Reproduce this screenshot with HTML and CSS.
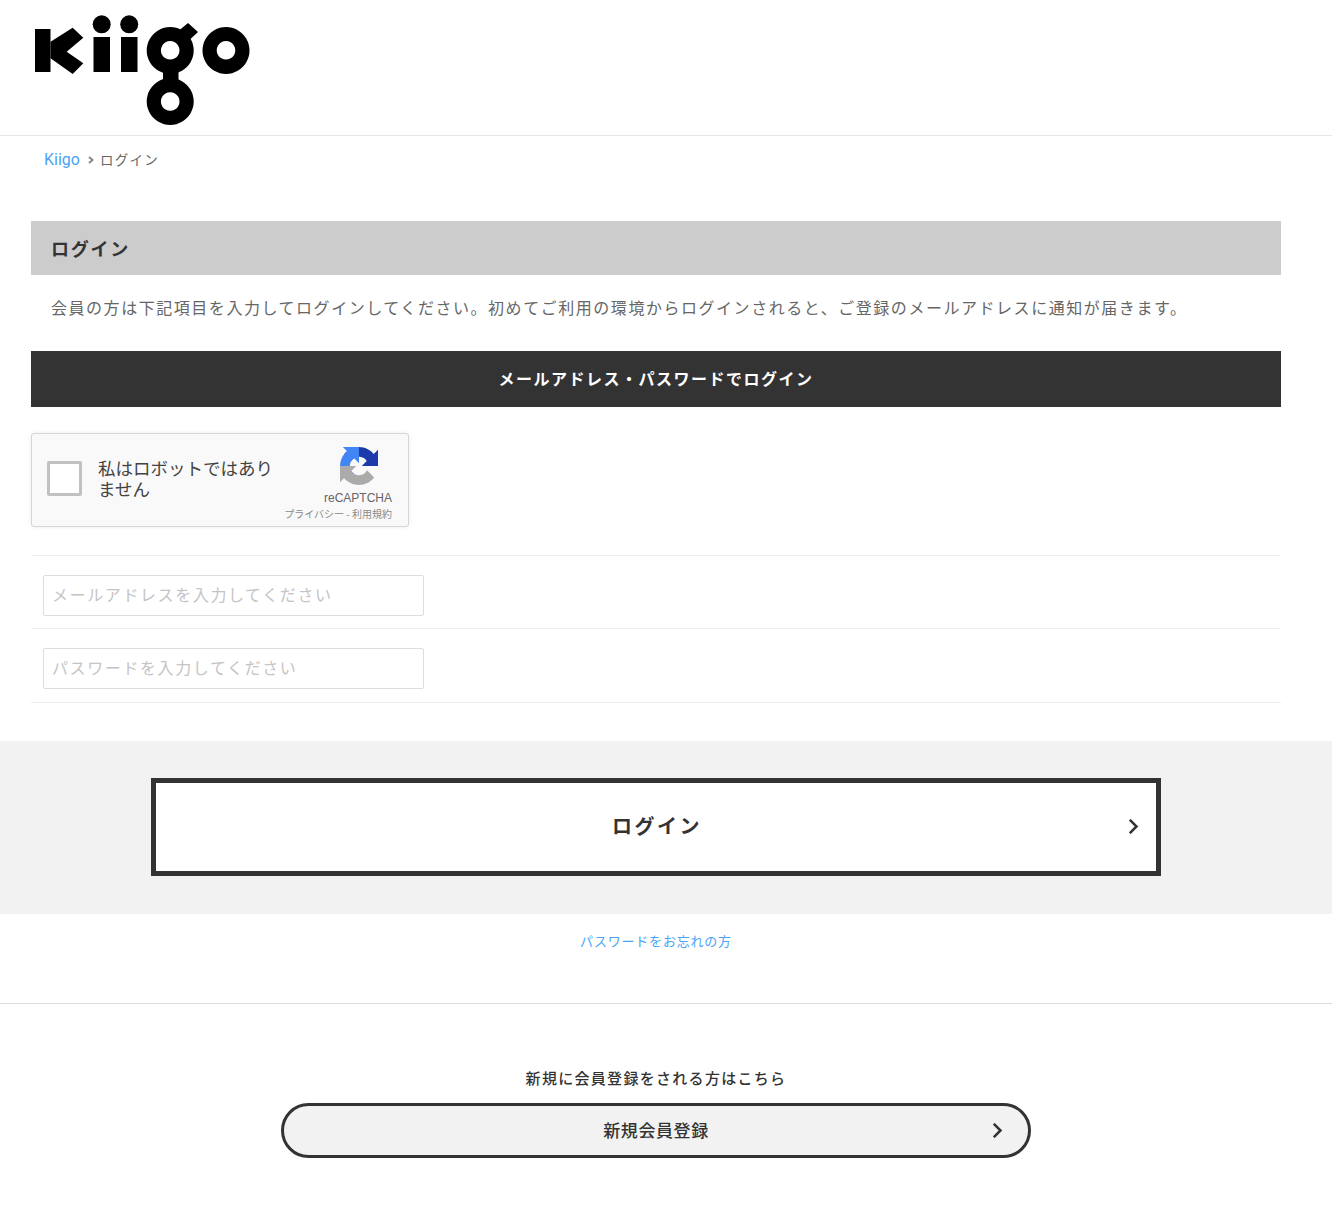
FILE: index.html
```html
<!DOCTYPE html>
<html lang="ja">
<head>
<meta charset="utf-8">
<title>ログイン | Kiigo</title>
<link rel="stylesheet" href="styles.css">
</head>
<body>
<header class="site-header">
  <svg class="logo" viewBox="0 0 216 110" aria-label="Kiigo" role="img">
    <path d="M1 14h15.500v43H1z"/>
    <path d="M16.500 26.700 38.700 12.700 49.300 22.700 32.700 36.700 49.300 48.300 38.700 59 16.500 43.300z"/>
    <path d="M59.500 22H76v35H59.500zM87 22h16.500v35H87z"/>
    <circle cx="67.700" cy="9.300" r="9"/>
    <circle cx="95.200" cy="9.300" r="9"/>
    <path d="M142 18 154 8 164 17 150 30z"/>
    <path d="M129 55h15.500v10H129z"/>
    <path fill-rule="evenodd" d="M136.200 12a23.500 23.500 0 1 0 .01 0zM136.200 26a9.300 9.300 0 1 1-.01 0z"/>
    <path fill-rule="evenodd" d="M136.200 63a23.500 23.500 0 1 0 .01 0zM136.200 77.200a9.300 9.300 0 1 1-.01 0z"/>
    <path fill-rule="evenodd" d="M192 12a23.500 23.500 0 1 0 .01 0zM192 26a9.300 9.300 0 1 1-.01 0z"/>
  </svg>
</header>
<nav class="breadcrumb">
  <a class="link" href="#">Kiigo</a>
  <svg class="crumb-sep" viewBox="0 0 8 8"><path d="M2 1l3.500 3L2 7"/></svg>
  <span class="crumb-current">ログイン</span>
</nav>
<main>
  <div class="wrap">
    <h1 class="page-title">ログイン</h1>
    <p class="lead">会員の方は下記項目を入力してログインしてください。初めてご利用の環境からログインされると、ご登録のメールアドレスに通知が届きます。</p>
    <h2 class="bar-title">メールアドレス・パスワードでログイン</h2>
    <div class="captcha">
      <span class="captcha-box"></span>
      <span class="captcha-label">私はロボットではありません</span>
      <div class="captcha-brand">
        <svg class="captcha-icon" viewBox="0 0 64 64">
          <path fill="#1c3aa9" d="M64 31.955l-.033-1.37V4.687l-7.16 7.16C50.948 4.674 42.033.093 32.05.093 21.66.093 12.43 5.05 6.595 12.73l11.736 11.86a15.55 15.55 0 0 1 4.753-5.333c2.05-1.6 4.952-2.906 8.968-2.906.485 0 .86.057 1.135.163 4.976.393 9.288 3.14 11.828 7.124l-8.307 8.307c10.522-.04 22.4-.066 27.3.01"/>
          <path fill="#4285f4" d="M32.04.002l-1.37.033H4.772l7.16 7.16C4.759 13.054.178 21.97.178 31.952c0 10.39 4.957 19.62 12.637 25.455l11.86-11.736a15.55 15.55 0 0 1-5.333-4.753c-1.6-2.05-2.906-4.952-2.906-8.968 0-.485.057-.86.163-1.135.393-4.976 3.14-9.288 7.124-11.828l8.307 8.307c-.04-10.522-.066-22.4.01-27.3"/>
          <path fill="#ababab" d="M.002 31.958l.033 1.37v25.898l7.16-7.16c5.86 7.173 14.775 11.754 24.757 11.754 10.39 0 19.62-4.957 25.455-12.637l-11.736-11.86a15.55 15.55 0 0 1-4.753 5.333c-2.05 1.6-4.952 2.906-8.968 2.906-.485 0-.86-.057-1.135-.163-4.976-.393-9.288-3.14-11.828-7.124l8.307-8.307c-10.522.04-22.4.066-27.3-.01"/>
        </svg>
        <span class="captcha-name">reCAPTCHA</span>
        <span class="captcha-terms">プライバシー - 利用規約</span>
      </div>
    </div>
    <div class="field-row"><input class="field" type="text" placeholder="メールアドレスを入力してください"></div>
    <div class="field-row field-row-last"><input class="field" type="password" placeholder="パスワードを入力してください"></div>
  </div>
  <section class="action-band">
    <a class="login-btn" href="#">ログイン
      <svg class="chev chev-login" viewBox="0 0 12 18"><path d="M2 2l7 7-7 7"/></svg>
    </a>
  </section>
  <p class="forgot"><a class="link" href="#">パスワードをお忘れの方</a></p>
  <section class="register">
    <p class="register-text">新規に会員登録をされる方はこちら</p>
    <a class="register-btn" href="#">新規会員登録
      <svg class="chev chev-register" viewBox="0 0 12 18"><path d="M2 2l7 7-7 7"/></svg>
    </a>
  </section>
</main>
</body>
</html>
```
FILE: styles.css
```css
* { box-sizing: border-box; }
html, body { margin: 0; padding: 0; }
body {
  background: #fff;
  color: #333;
  font-family: "Noto Sans CJK JP", "Noto Sans", sans-serif;
  height: 1211px;
  overflow: hidden;
}
a { text-decoration: none; }
.link { color: #4aa3f5; }

.site-header {
  height: 136px;
  border-bottom: 1px solid #e6e6e6;
  padding: 15px 0 0 34px;
}
.logo { display: block; width: 216px; height: 110px; fill: #000; }

.breadcrumb {
  display: flex;
  align-items: flex-start;
  height: 48px;
  padding: 13px 0 0 44px;
  margin-bottom: 37px;
  font-size: 13.500px;
  line-height: 20px;
}
.breadcrumb .link { font-family: "Roboto", "Noto Sans", sans-serif; font-size: 16px; line-height: 22px; }
.crumb-sep { width: 8px; height: 8px; margin: 7px 5px 0 7px; fill: none; stroke: #888; stroke-width: 2; }
.crumb-current { color: #666; letter-spacing: 1.300px; }

.wrap { margin-left: 31px; width: 1250px; }
.page-title {
  margin: 0;
  height: 54px;
  background: #ccc;
  padding-left: 20px;
  font-size: 18px;
  font-weight: 700;
  line-height: 55px;
  letter-spacing: 1.750px;
}
.lead {
  margin: 0;
  padding: 18px 0 0 20px;
  height: 76px;
  font-size: 16px;
  line-height: 28px;
  letter-spacing: 1.540px;
  color: #666;
  white-space: nowrap;
}
.bar-title {
  margin: 0;
  height: 56px;
  background: #333;
  color: #fff;
  font-size: 16px;
  font-weight: 700;
  line-height: 54px;
  letter-spacing: 1.500px;
  text-align: center;
}
.captcha {
  position: relative;
  display: flex;
  margin: 26px 0 28px;
  width: 378px;
  height: 94px;
  background: #f9f9f9;
  border: 1px solid #d6d6d6;
  border-radius: 3px;
  box-shadow: 0 0 4px rgba(0, 0, 0, .08);
}
.captcha-box {
  flex: none;
  width: 35px;
  height: 35px;
  margin: 27px 0 0 15px;
  background: #fff;
  border: 3px solid #c1c1c1;
  border-radius: 2px;
}
.captcha-label {
  width: 180px;
  margin: 23px 0 0 16px;
  font-size: 17.500px;
  line-height: 21px;
  color: #444;
}
.captcha-brand {
  position: absolute;
  right: 16px;
  top: 13px;
  display: flex;
  flex-direction: column;
  width: 110px;
}
.captcha-icon { width: 38px; height: 38px; margin-left: 58px; }
.captcha-name {
  align-self: flex-end;
  margin-top: 6px;
  font-family: "Liberation Sans", sans-serif;
  font-size: 12px;
  line-height: 15px;
  color: #666;
}
.captcha-terms {
  align-self: flex-end;
  margin-top: 0;
  font-size: 10px;
  line-height: 15px;
  color: #8a8a8a;
  white-space: nowrap;
}
.field-row {
  height: 73px;
  padding: 19px 0 0 12px;
  border-top: 1px solid #eee;
}
.field-row-last { height: 75px; border-bottom: 1px solid #eee; }
.field {
  display: block;
  width: 381px;
  height: 41px;
  padding: 0 8px 3px;
  background: #fff;
  border: 1px solid #ddd;
  border-radius: 2px;
  font-family: inherit;
  font-size: 16px;
  letter-spacing: 1.600px;
  outline: none;
}
.field::placeholder { color: #c4c4c4; opacity: 1; }

.action-band {
  margin-top: 38px;
  height: 173px;
  padding: 37px 151px 0;
  background: #f2f2f2;
}
.login-btn {
  position: relative;
  display: block;
  width: 1010px;
  height: 98px;
  padding-left: 2px;
  background: #fff;
  border: 5px solid #333;
  color: #333;
  font-size: 20px;
  font-weight: 700;
  line-height: 86px;
  letter-spacing: 2.500px;
  text-align: center;
}
.chev { position: absolute; width: 10px; height: 15px; fill: none; stroke: #333; stroke-width: 3; stroke-linecap: square; }
.chev-login { right: 17px; top: 36px; }
.chev-register { right: 25px; top: 17px; }

.forgot {
  width: 1312px;
  margin: 0;
  height: 89px;
  padding-top: 17px;
  font-size: 13px;
  line-height: 20px;
  letter-spacing: .800px;
  text-align: center;
}
.register {
  border-top: 1px solid #ddd;
  padding: 62px 20px 0 0;
}
.register-text {
  margin: 0 0 13px;
  font-size: 15px;
  font-weight: 500;
  line-height: 24px;
  letter-spacing: 1.300px;
  text-align: center;
}
.register-btn {
  position: relative;
  display: block;
  width: 750px;
  height: 55px;
  margin: 0 auto;
  background: #f2f2f2;
  border: 3px solid #333;
  border-radius: 28px;
  color: #333;
  font-size: 17px;
  font-weight: 500;
  line-height: 48px;
  letter-spacing: .600px;
  text-align: center;
}
```
